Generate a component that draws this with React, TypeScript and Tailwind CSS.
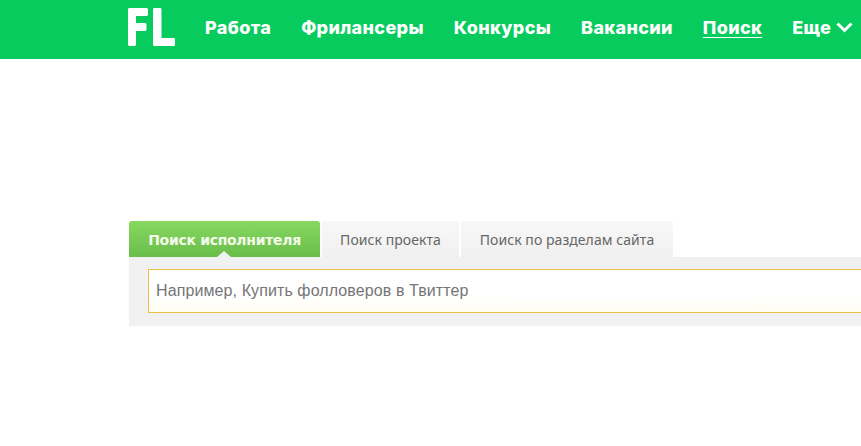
export default function App() {
  const links = ['Работа', 'Фрилансеры', 'Конкурсы', 'Вакансии'];
  return (
    <div className="h-[446px] w-[861px] overflow-hidden bg-white">
      {/* Header */}
      <div className="flex h-[59px] items-center bg-[#07cc5d] pl-[128px] text-white">
        <div className="flex h-[59px] w-[77px] shrink-0 items-start pt-[8px]">
          <svg width="48" height="39" viewBox="0 0 48 39" fill="#fff">
            <path d="M0 1.500C0 .6.6 0 1.500 0h17c.9 0 1.500.6 1.500 1.500v5c0 .9-.6 1.500-1.500 1.500H8v7h9c.9 0 1.500.6 1.500 1.500v5c0 .9-.6 1.500-1.500 1.500H8v13.500c0 .9-.6 1.500-1.500 1.500h-5C.6 38 0 37.400 0 36.500z" />
            <path d="M25 1.500c0-.9.6-1.500 1.500-1.500h5.500c.9 0 1.500.6 1.500 1.500V30h12c.9 0 1.500.6 1.500 1.500v5c0 .9-.6 1.500-1.500 1.500H26.500c-.9 0-1.500-.6-1.500-1.500z" />
          </svg>
        </div>
        <div className="flex items-center gap-[30px] pb-[4px] font-['Inter',sans-serif] text-[18px] font-extrabold tracking-[0.35px]">
          {links.map((l) => (
            <a key={l}>{l}</a>
          ))}
          <a className="underline underline-offset-[3px]">Поиск</a>
          <a className="flex items-center gap-[5px]">
            Еще
            <svg width="17" height="11" viewBox="0 0 17 11" fill="none" stroke="#fff" strokeWidth="3">
              <path d="M1.500 1.500 8.500 8.500 15.500 1.500" />
            </svg>
          </a>
        </div>
      </div>

      {/* Search */}
      <div className="mt-[162px] ml-[129px] w-[1000px]">
        <div className="flex h-[36px] gap-[2px] font-['Noto_Sans',sans-serif] text-[14px] tracking-[0.06px] text-[#666]">
          <div className="relative flex w-[191px] items-center justify-center rounded-t-[3px] bg-gradient-to-b from-[#86d85f] to-[#69bd4b] pt-[2px] font-['DejaVu_Sans',sans-serif] text-[14px] font-bold tracking-[-0.3px] text-[#f4fbe9]">
            Поиск исполнителя
            <span className="absolute bottom-0 left-[88px] size-0 border-x-[7px] border-b-[6px] border-x-transparent border-b-[#f0f0f0]" />
          </div>
          <div className="flex w-[137px] items-center justify-center bg-gradient-to-b from-[#f8f8f8] to-[#f0f0f0]">
            Поиск проекта
          </div>
          <div className="flex w-[212px] items-center justify-center bg-gradient-to-b from-[#f8f8f8] to-[#f0f0f0]">
            Поиск по разделам сайта
          </div>
        </div>
        <div className="h-[69px] bg-[#f1f1f1] pt-[12px] pl-[19px]">
          <div className="flex h-[44px] w-[900px] items-center border border-[#e8c04a] bg-gradient-to-b from-white from-60% to-[#fffdf0] pl-[7px] font-['Liberation_Sans',sans-serif] text-[16px] tracking-[0.1px] text-[#757575]">
            Например, Купить фолловеров в Твиттер
          </div>
        </div>
      </div>
    </div>
  );
}
